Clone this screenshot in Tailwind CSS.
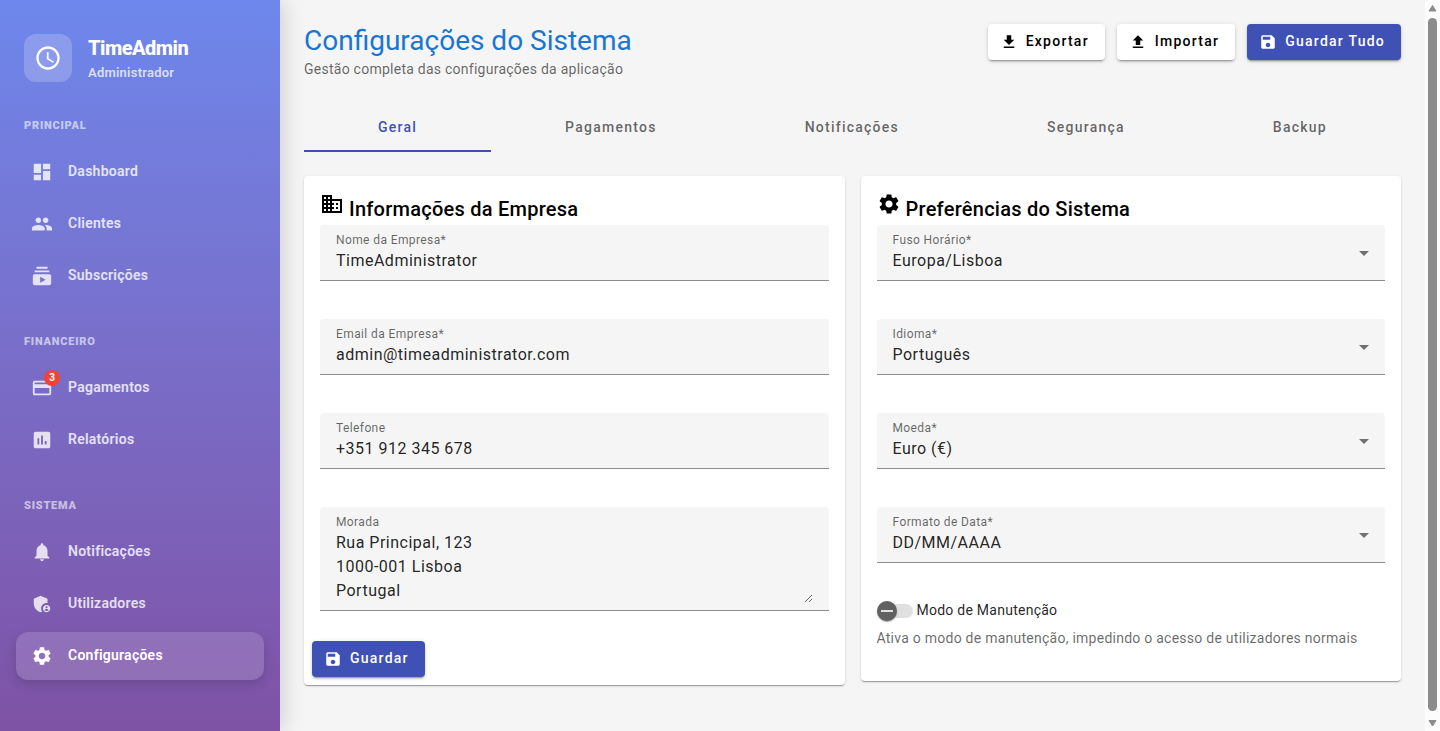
<!DOCTYPE html>
<html lang="pt">
<head>
<meta charset="utf-8">
<meta name="viewport" content="width=device-width, initial-scale=1">
<title>TimeAdmin – Configurações do Sistema</title>
<script src="https://cdn.jsdelivr.net/npm/@tailwindcss/browser@4"></script>
</head>
<body class="bg-neutral-100 font-[Roboto,sans-serif] text-black/87">
<svg class="hidden" aria-hidden="true">
  <symbol id="schedule" viewBox="0 0 24 24"><path d="M11.99 2C6.47 2 2 6.48 2 12s4.47 10 9.99 10C17.52 22 22 17.52 22 12S17.52 2 11.99 2zM12 20c-4.42 0-8-3.58-8-8s3.58-8 8-8 8 3.58 8 8-3.58 8-8 8zm.5-13H11v6l5.25 3.15.75-1.23-4.5-2.67z"/></symbol>
  <symbol id="dashboard" viewBox="0 0 24 24"><path d="M3 13h8V3H3v10zm0 8h8v-6H3v6zm10 0h8V11h-8v10zm0-18v6h8V3h-8z"/></symbol>
  <symbol id="people" viewBox="0 0 24 24"><path d="M16 11c1.66 0 2.99-1.34 2.99-3S17.66 5 16 5c-1.66 0-3 1.34-3 3s1.34 3 3 3zm-8 0c1.66 0 2.99-1.34 2.99-3S9.66 5 8 5C6.34 5 5 6.34 5 8s1.34 3 3 3zm0 2c-2.33 0-7 1.17-7 3.5V19h14v-2.5c0-2.33-4.67-3.5-7-3.5zm8 0c-.29 0-.62.02-.97.05 1.16.84 1.97 1.97 1.97 3.45V19h6v-2.5c0-2.33-4.67-3.5-7-3.5z"/></symbol>
  <symbol id="subscriptions" viewBox="0 0 24 24"><path d="M20 8H4V6h16v2zm-2-6H6v2h12V2zm4 10v8c0 1.1-.9 2-2 2H4c-1.1 0-2-.9-2-2v-8c0-1.1.9-2 2-2h16c1.1 0 2 .9 2 2zm-6 4l-6-3.27v6.53L16 16z"/></symbol>
  <symbol id="payment" viewBox="0 0 24 24"><path d="M20 4H4c-1.11 0-1.99.89-1.99 2L2 18c0 1.11.89 2 2 2h16c1.11 0 2-.89 2-2V6c0-1.11-.89-2-2-2zm0 14H4v-6h16v6zm0-10H4V6h16v2z"/></symbol>
  <symbol id="assessment" viewBox="0 0 24 24"><path d="M19 3H5c-1.1 0-2 .9-2 2v14c0 1.1.9 2 2 2h14c1.1 0 2-.9 2-2V5c0-1.1-.9-2-2-2zM9 17H7v-7h2v7zm4 0h-2V7h2v10zm4 0h-2v-4h2v4z"/></symbol>
  <symbol id="notifications" viewBox="0 0 24 24"><path d="M12 22c1.1 0 2-.9 2-2h-4c0 1.1.89 2 2 2zm6-6v-5c0-3.07-1.64-5.64-4.5-6.32V4c0-.83-.67-1.5-1.5-1.5s-1.5.67-1.5 1.5v.68C7.63 5.36 6 7.92 6 11v5l-2 2v1h16v-1l-2-2z"/></symbol>
  <symbol id="admin" viewBox="0 0 24 24"><path d="M17 11c.34 0 .67.04 1 .09V6.27L10.5 3 3 6.27v4.91c0 4.54 3.2 8.79 7.5 9.82.55-.13 1.08-.32 1.6-.55-.69-.98-1.1-2.17-1.1-3.45 0-3.31 2.69-6 6-6z"/><path d="M17 13c-2.21 0-4 1.79-4 4s1.79 4 4 4 4-1.79 4-4-1.79-4-4-4zm0 1.38c.62 0 1.12.51 1.12 1.12s-.51 1.12-1.12 1.12-1.12-.51-1.12-1.12.5-1.12 1.12-1.12zm0 5.37c-.93 0-1.74-.46-2.24-1.17.05-.72 1.51-1.08 2.24-1.08s2.19.36 2.24 1.08c-.5.71-1.31 1.17-2.24 1.17z"/></symbol>
  <symbol id="settings" viewBox="0 0 24 24"><path d="M19.14 12.94c.04-.3.06-.61.06-.94 0-.32-.02-.64-.07-.94l2.03-1.58c.18-.14.23-.41.12-.61l-1.92-3.32c-.12-.22-.37-.29-.59-.22l-2.39.96c-.5-.38-1.03-.7-1.62-.94l-.36-2.54c-.04-.24-.24-.41-.48-.41h-3.84c-.24 0-.43.17-.47.41l-.36 2.54c-.59.24-1.13.57-1.62.94l-2.39-.96c-.22-.08-.47 0-.59.22L2.74 8.87c-.12.21-.08.47.12.61l2.03 1.58c-.05.3-.09.63-.09.94s.02.64.07.94l-2.03 1.58c-.18.14-.23.41-.12.61l1.92 3.32c.12.22.37.29.59.22l2.39-.96c.5.38 1.03.7 1.62.94l.36 2.54c.05.24.24.41.48.41h3.84c.24 0 .44-.17.47-.41l.36-2.54c.59-.24 1.13-.56 1.62-.94l2.39.96c.22.08.47 0 .59-.22l1.92-3.32c.12-.22.07-.47-.12-.61l-2.01-1.58zM12 15.6c-1.98 0-3.6-1.62-3.6-3.6s1.62-3.6 3.6-3.6 3.6 1.62 3.6 3.6-1.62 3.6-3.6 3.6z"/></symbol>
  <symbol id="business" viewBox="0 0 24 24"><path d="M12 7V3H2v18h20V7H12zM6 19H4v-2h2v2zm0-4H4v-2h2v2zm0-4H4V9h2v2zm0-4H4V5h2v2zm4 12H8v-2h2v2zm0-4H8v-2h2v2zm0-4H8V9h2v2zm0-4H8V5h2v2zm10 12h-8v-2h2v-2h-2v-2h2v-2h-2V9h8v10zm-2-8h-2v2h2v-2zm0 4h-2v2h2v-2z"/></symbol>
  <symbol id="save" viewBox="0 0 24 24"><path d="M17 3H5c-1.11 0-2 .9-2 2v14c0 1.1.89 2 2 2h14c1.1 0 2-.9 2-2V7l-4-4zm-5 16c-1.66 0-3-1.34-3-3s1.34-3 3-3 3 1.34 3 3-1.34 3-3 3zm3-10H5V5h10v4z"/></symbol>
  <symbol id="download" viewBox="0 0 24 24"><path d="M19 9h-4V3H9v6H5l7 7 7-7zM5 18v2h14v-2H5z"/></symbol>
  <symbol id="upload" viewBox="0 0 24 24"><path d="M9 16h6v-6h4l-7-7-7 7h4v6zm-4 2h14v2H5v-2z"/></symbol>
  <symbol id="caret" viewBox="0 0 10 5"><path d="M0 0l5 5 5-5z"/></symbol>
</svg>

<div class="flex h-screen overflow-hidden">
  <aside class="relative z-10 flex w-[280px] shrink-0 flex-col bg-linear-to-b from-[#6d87ec] to-[#7e52a5] px-4 pt-[34px] text-white shadow-[4px_0_20px_rgba(0,0,0,0.15)]">
    <div class="flex gap-4 px-2">
      <div class="flex size-12 items-center justify-center rounded-xl bg-white/20">
        <svg class="size-7 fill-current" aria-hidden="true"><use href="#schedule"/></svg>
      </div>
      <div class="h-12">
        <p class="text-xl leading-7 font-extrabold tracking-tight">TimeAdmin</p>
        <p class="text-[13px] leading-[22px] font-semibold tracking-[0.018em] text-white/75">Administrador</p>
      </div>
    </div>

    <nav aria-label="Menu principal" class="text-sm font-semibold tracking-[0.018em] text-white/80">
      <h2 class="mt-[34px] mb-3 px-2 text-[11px] leading-5 font-black tracking-[0.07em] text-white/60">PRINCIPAL</h2>
      <ul class="flex flex-col gap-1">
        <li><a href="#" class="flex h-12 items-center gap-3.5 rounded-xl px-3.5"><span class="flex w-6 justify-center"><svg class="size-[22px] fill-current" aria-hidden="true"><use href="#dashboard"/></svg></span><span class="pb-0.5">Dashboard</span></a></li>
        <li><a href="#" class="flex h-12 items-center gap-3.5 rounded-xl px-3.5"><span class="flex w-6 justify-center"><svg class="size-[22px] fill-current" aria-hidden="true"><use href="#people"/></svg></span><span class="pb-0.5">Clientes</span></a></li>
        <li><a href="#" class="flex h-12 items-center gap-3.5 rounded-xl px-3.5"><span class="flex w-6 justify-center"><svg class="size-[22px] fill-current" aria-hidden="true"><use href="#subscriptions"/></svg></span><span class="pb-0.5">Subscrições</span></a></li>
      </ul>
      <h2 class="mt-8 mb-3 px-2 text-[11px] leading-5 font-black tracking-[0.07em] text-white/60">FINANCEIRO</h2>
      <ul class="flex flex-col gap-1">
        <li><a href="#" class="flex h-12 items-center gap-3.5 rounded-xl px-3.5"><span class="relative flex w-6 justify-center"><svg class="size-[22px] fill-current" aria-hidden="true"><use href="#payment"/></svg><span class="absolute -top-[7px] left-3.5 size-4 rounded-full bg-[#f44336] text-center text-[10px] leading-4 font-bold tracking-normal text-white">3</span></span><span class="pb-0.5">Pagamentos</span></a></li>
        <li><a href="#" class="flex h-12 items-center gap-3.5 rounded-xl px-3.5"><span class="flex w-6 justify-center"><svg class="size-[22px] fill-current" aria-hidden="true"><use href="#assessment"/></svg></span><span class="pb-0.5">Relatórios</span></a></li>
      </ul>
      <h2 class="mt-8 mb-3 px-2 text-[11px] leading-5 font-black tracking-[0.07em] text-white/60">SISTEMA</h2>
      <ul class="flex flex-col gap-1">
        <li><a href="#" class="flex h-12 items-center gap-3.5 rounded-xl px-3.5"><span class="flex w-6 justify-center"><svg class="size-[22px] fill-current" aria-hidden="true"><use href="#notifications"/></svg></span><span class="pb-0.5">Notificações</span></a></li>
        <li><a href="#" class="flex h-12 items-center gap-3.5 rounded-xl px-3.5"><span class="flex w-6 justify-center"><svg class="size-[22px] fill-current" aria-hidden="true"><use href="#admin"/></svg></span><span class="pb-0.5">Utilizadores</span></a></li>
        <li><a href="#" aria-current="page" class="flex h-12 items-center gap-3.5 rounded-xl bg-white/15 px-3.5 text-white shadow-[0_4px_12px_rgba(0,0,0,0.15)]"><span class="flex w-6 justify-center"><svg class="size-[22px] fill-current" aria-hidden="true"><use href="#settings"/></svg></span><span class="pb-0.5">Configurações</span></a></li>
      </ul>
    </nav>
  </aside>

  <main class="min-w-0 flex-1 p-6">
    <header class="flex items-start justify-between">
      <div>
        <h1 class="text-[28px] leading-[34px] text-[#1976d2]">Configurações do Sistema</h1>
        <p class="mt-px mb-px text-sm tracking-[0.018em] text-black/60">Gestão completa das configurações da aplicação</p>
      </div>
      <div class="flex gap-3 text-sm font-medium tracking-[0.089em]">
        <button type="button" class="flex h-9 items-center gap-2 rounded bg-white pr-4 pl-3 text-black shadow-[0_3px_1px_-2px_rgba(0,0,0,0.2),0_2px_2px_rgba(0,0,0,0.14),0_1px_5px_rgba(0,0,0,0.12)]"><svg class="size-[18px] fill-current" aria-hidden="true"><use href="#download"/></svg><span class="pb-0.5">Exportar</span></button>
        <button type="button" class="flex h-9 items-center gap-2 rounded bg-white pr-4 pl-3 text-black shadow-[0_3px_1px_-2px_rgba(0,0,0,0.2),0_2px_2px_rgba(0,0,0,0.14),0_1px_5px_rgba(0,0,0,0.12)]"><svg class="size-[18px] fill-current" aria-hidden="true"><use href="#upload"/></svg><span class="pb-0.5">Importar</span></button>
        <button type="button" class="flex h-9 items-center gap-2 rounded bg-[#3f51b5] pr-4 pl-3 text-white shadow-[0_3px_1px_-2px_rgba(0,0,0,0.2),0_2px_2px_rgba(0,0,0,0.14),0_1px_5px_rgba(0,0,0,0.12)]"><svg class="size-[18px] fill-current" aria-hidden="true"><use href="#save"/></svg><span class="pb-0.5">Guardar Tudo</span></button>
      </div>
    </header>

    <div role="tablist" class="mt-6 flex h-12 text-sm font-medium tracking-[0.089em] text-black/60">
      <button type="button" role="tab" aria-selected="true" class="flex-auto border-b-2 border-[#3f51b5] px-6 text-[#3f51b5]">Geral</button>
      <button type="button" role="tab" aria-selected="false" class="flex-auto border-b-2 border-transparent px-6">Pagamentos</button>
      <button type="button" role="tab" aria-selected="false" class="flex-auto border-b-2 border-transparent px-6">Notificações</button>
      <button type="button" role="tab" aria-selected="false" class="flex-auto border-b-2 border-transparent px-6">Segurança</button>
      <button type="button" role="tab" aria-selected="false" class="flex-auto border-b-2 border-transparent px-6">Backup</button>
    </div>

    <div class="mt-6 grid grid-cols-2 items-start gap-4">
      <section class="rounded bg-white pt-4 pb-2 shadow-[0_2px_1px_-1px_rgba(0,0,0,0.2),0_1px_1px_rgba(0,0,0,0.14),0_1px_3px_rgba(0,0,0,0.12)]">
        <h2 class="flex h-[33px] gap-[5px] px-4 text-xl leading-[35px] font-medium tracking-[0.0125em] text-black"><svg class="size-6 fill-current" aria-hidden="true"><use href="#business"/></svg>Informações da Empresa</h2>
        <form class="flex flex-col gap-[38px] px-4">
          <div class="flex flex-col gap-px rounded-t border-b border-[#8c8c8c] bg-neutral-100 px-4 py-[7px]">
            <label for="nome" class="text-xs leading-4 tracking-[0.033em] text-black/60">Nome da Empresa*</label>
            <input id="nome" type="text" value="TimeAdministrator" class="h-6 w-full tracking-[0.031em] outline-none">
          </div>
          <div class="flex flex-col gap-px rounded-t border-b border-[#8c8c8c] bg-neutral-100 px-4 py-[7px]">
            <label for="email" class="text-xs leading-4 tracking-[0.033em] text-black/60">Email da Empresa*</label>
            <input id="email" type="email" value="admin@timeadministrator.com" class="h-6 w-full tracking-[0.031em] outline-none">
          </div>
          <div class="flex flex-col gap-px rounded-t border-b border-[#8c8c8c] bg-neutral-100 px-4 py-[7px]">
            <label for="telefone" class="text-xs leading-4 tracking-[0.033em] text-black/60">Telefone</label>
            <input id="telefone" type="tel" value="+351 912 345 678" class="h-6 w-full tracking-[0.031em] outline-none">
          </div>
          <div class="flex flex-col gap-px rounded-t border-b border-[#8c8c8c] bg-neutral-100 px-4 py-[7px]">
            <label for="morada" class="text-xs leading-4 tracking-[0.033em] text-black/60">Morada</label>
            <textarea id="morada" rows="3" class="block w-full resize-y overflow-auto leading-6 tracking-[0.031em] outline-none">Rua Principal, 123
1000-001 Lisboa
Portugal</textarea>
          </div>
        </form>
        <div class="mt-[30px] flex px-2">
          <button type="button" class="flex h-9 items-center gap-2 rounded bg-[#3f51b5] pr-4 pl-3 text-sm font-medium tracking-[0.089em] text-white shadow-[0_3px_1px_-2px_rgba(0,0,0,0.2),0_2px_2px_rgba(0,0,0,0.14),0_1px_5px_rgba(0,0,0,0.12)]"><svg class="size-[18px] fill-current" aria-hidden="true"><use href="#save"/></svg><span class="pb-0.5">Guardar</span></button>
        </div>
      </section>

      <section class="rounded bg-white pt-4 pb-[33px] shadow-[0_2px_1px_-1px_rgba(0,0,0,0.2),0_1px_1px_rgba(0,0,0,0.14),0_1px_3px_rgba(0,0,0,0.12)]">
        <h2 class="flex h-[33px] gap-[5px] px-4 text-xl leading-[35px] font-medium tracking-[0.0125em] text-black"><svg class="size-6 fill-current" aria-hidden="true"><use href="#settings"/></svg>Preferências do Sistema</h2>
        <form class="flex flex-col gap-[38px] px-4">
          <div class="relative flex flex-col gap-px rounded-t border-b border-[#8c8c8c] bg-neutral-100 px-4 py-[7px]">
            <label for="fuso" class="text-xs leading-4 tracking-[0.033em] text-black/60">Fuso Horário*</label>
            <select id="fuso" class="h-6 w-full appearance-none tracking-[0.031em] outline-none"><option>Europa/Lisboa</option></select>
            <span class="pointer-events-none absolute inset-y-0 right-4 flex items-center pt-0.5"><svg class="h-[5px] w-2.5 fill-black/54" aria-hidden="true"><use href="#caret"/></svg></span>
          </div>
          <div class="relative flex flex-col gap-px rounded-t border-b border-[#8c8c8c] bg-neutral-100 px-4 py-[7px]">
            <label for="idioma" class="text-xs leading-4 tracking-[0.033em] text-black/60">Idioma*</label>
            <select id="idioma" class="h-6 w-full appearance-none tracking-[0.031em] outline-none"><option>Português</option></select>
            <span class="pointer-events-none absolute inset-y-0 right-4 flex items-center pt-0.5"><svg class="h-[5px] w-2.5 fill-black/54" aria-hidden="true"><use href="#caret"/></svg></span>
          </div>
          <div class="relative flex flex-col gap-px rounded-t border-b border-[#8c8c8c] bg-neutral-100 px-4 py-[7px]">
            <label for="moeda" class="text-xs leading-4 tracking-[0.033em] text-black/60">Moeda*</label>
            <select id="moeda" class="h-6 w-full appearance-none tracking-[0.031em] outline-none"><option>Euro (€)</option></select>
            <span class="pointer-events-none absolute inset-y-0 right-4 flex items-center pt-0.5"><svg class="h-[5px] w-2.5 fill-black/54" aria-hidden="true"><use href="#caret"/></svg></span>
          </div>
          <div class="relative flex flex-col gap-px rounded-t border-b border-[#8c8c8c] bg-neutral-100 px-4 py-[7px]">
            <label for="formato" class="text-xs leading-4 tracking-[0.033em] text-black/60">Formato de Data*</label>
            <select id="formato" class="h-6 w-full appearance-none tracking-[0.031em] outline-none"><option>DD/MM/AAAA</option></select>
            <span class="pointer-events-none absolute inset-y-0 right-4 flex items-center pt-0.5"><svg class="h-[5px] w-2.5 fill-black/54" aria-hidden="true"><use href="#caret"/></svg></span>
          </div>
          <div class="flex flex-col gap-[7px] text-sm tracking-[0.018em]">
            <div class="flex items-center gap-1">
              <span class="relative flex h-5 w-9 items-center">
                <input id="manutencao" type="checkbox" role="switch" aria-describedby="manutencao-info" class="h-3.5 w-9 appearance-none rounded-full bg-[#e0e0e0]">
                <span class="pointer-events-none absolute inset-y-0 left-0 flex w-5 items-center justify-center rounded-full bg-[#616161] shadow-[0_2px_1px_-1px_rgba(0,0,0,0.2),0_1px_1px_rgba(0,0,0,0.14),0_1px_3px_rgba(0,0,0,0.12)]"><span class="h-0.5 w-3 bg-[#e0e0e0]"></span></span>
              </span>
              <label for="manutencao" class="pb-0.5 leading-[18px]">Modo de Manutenção</label>
            </div>
            <p id="manutencao-info" class="text-black/60">Ativa o modo de manutenção, impedindo o acesso de utilizadores normais</p>
          </div>
        </form>
      </section>
    </div>
  </main>

  <div class="flex w-[15px] shrink-0 flex-col items-center gap-1.5 bg-[#fcfcfc] py-1" aria-hidden="true">
    <svg class="h-2 w-[9px] fill-[#8b8b8b] stroke-[#8b8b8b]" viewBox="0 0 9 8" stroke-linejoin="round"><path d="M4.500 1.500L8 7H1z"/></svg>
    <div class="w-[9px] flex-1 rounded-full bg-[#8b8b8b]"></div>
    <svg class="mt-0.5 h-2 w-[9px] fill-[#8b8b8b] stroke-[#8b8b8b]" viewBox="0 0 9 8" stroke-linejoin="round"><path d="M4.500 7L8 1.500H1z"/></svg>
  </div>
</div>
</body>
</html>
